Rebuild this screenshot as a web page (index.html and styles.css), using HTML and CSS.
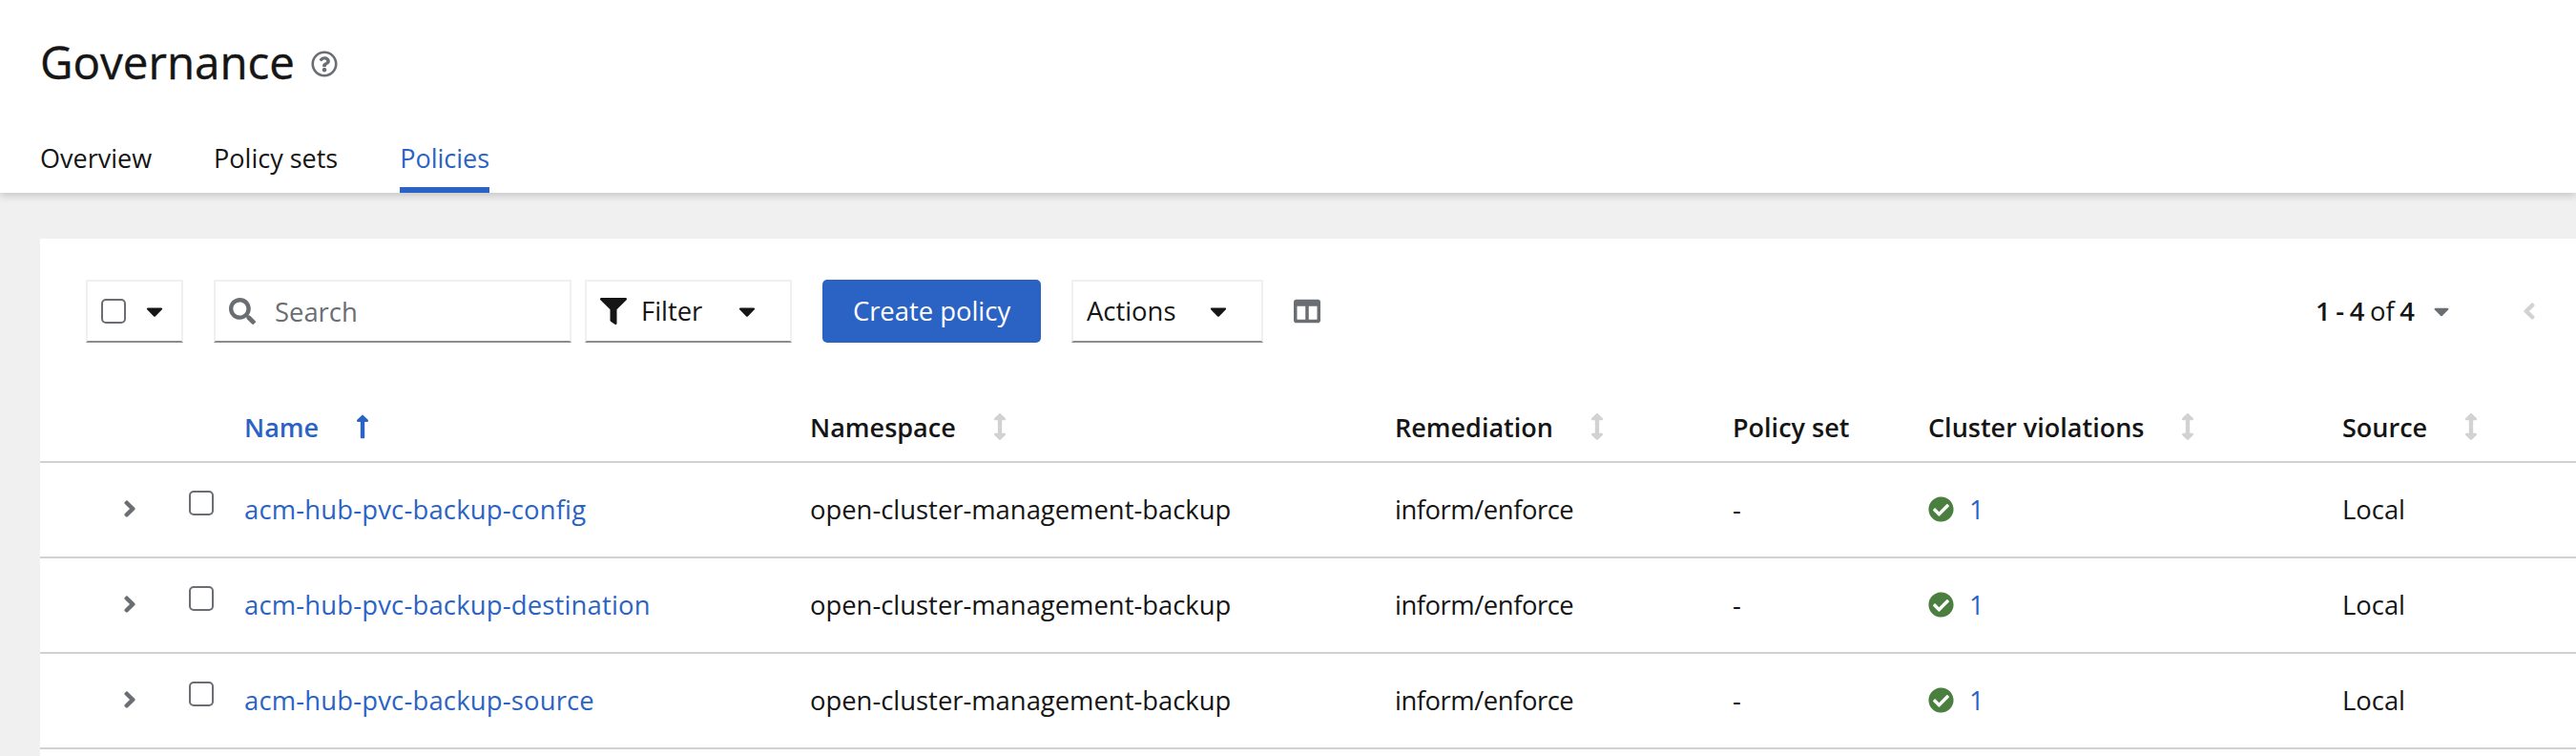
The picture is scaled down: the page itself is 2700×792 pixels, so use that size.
FILE: index.html
```html
<!DOCTYPE html>
<html lang="en">
<head>
  <meta charset="UTF-8">
  <title>Governance</title>
  <link rel="stylesheet" href="styles.css">
</head>
<body>
  <svg class="sprite" xmlns="http://www.w3.org/2000/svg">
    <symbol id="i-help" viewBox="0 0 512 512"><path d="M256 8C119.043 8 8 119.083 8 256c0 136.997 111.043 248 248 248s248-111.003 248-248C504 119.083 392.957 8 256 8zm0 448c-110.532 0-200-89.431-200-200 0-110.495 89.472-200 200-200 110.491 0 200 89.471 200 200 0 110.53-89.431 200-200 200zm107.244-255.2c0 67.052-72.421 68.084-72.421 92.863V300c0 6.627-5.373 12-12 12h-45.647c-6.627 0-12-5.373-12-12v-8.659c0-35.745 27.1-50.034 47.579-61.516 17.561-9.845 28.324-16.541 28.324-29.579 0-17.246-21.999-28.693-39.784-28.693-23.189 0-33.894 10.977-48.942 29.969-4.057 5.12-11.46 6.071-16.666 2.124l-27.824-21.098c-5.107-3.872-6.251-11.066-2.644-16.363C184.846 131.491 214.94 112 261.794 112c49.071 0 101.45 38.304 101.45 88.8zM298 368c0 23.159-18.841 42-42 42s-42-18.841-42-42 18.841-42 42-42 42 18.841 42 42z"/></symbol>
    <symbol id="i-search" viewBox="0 0 512 512"><path d="M505 442.7L405.3 343c-4.5-4.5-10.6-7-17-7H372c27.6-35.3 44-79.7 44-128C416 93.1 322.9 0 208 0S0 93.1 0 208s93.1 208 208 208c48.3 0 92.7-16.4 128-44v16.3c0 6.4 2.5 12.5 7 17l99.7 99.7c9.4 9.4 24.6 9.4 33.9 0l28.3-28.3c9.4-9.4 9.4-24.6.1-34zM208 336c-70.7 0-128-57.2-128-128 0-70.7 57.2-128 128-128 70.7 0 128 57.2 128 128 0 70.7-57.2 128-128 128z"/></symbol>
    <symbol id="i-filter" viewBox="0 0 512 512"><path d="M487.976 0H24.028C2.71 0-8.047 25.866 7.058 40.971L192 225.941V432c0 7.831 3.821 15.17 10.237 19.662l80 55.98C298.02 518.69 320 507.493 320 487.98V225.941l184.947-184.97C520.021 25.896 509.338 0 487.976 0z"/></symbol>
    <symbol id="i-caret" viewBox="0 0 320 512"><path d="M31.3 192h257.3c17.8 0 26.7 21.5 14.1 34.1L174.1 354.8c-7.8 7.8-20.5 7.8-28.3 0L17.2 226.1C4.6 213.5 13.5 192 31.3 192z"/></symbol>
    <symbol id="i-columns" viewBox="0 0 512 512"><path d="M464 32H48C21.49 32 0 53.49 0 80v352c0 26.51 21.49 48 48 48h416c26.51 0 48-21.49 48-48V80c0-26.51-21.49-48-48-48zM224 416H64V160h160v256zm224 0H288V160h160v256z"/></symbol>
    <symbol id="i-right" viewBox="0 0 256 512"><path d="M224.3 273l-136 136c-9.4 9.4-24.6 9.4-33.9 0l-22.6-22.6c-9.4-9.4-9.4-24.6 0-33.9l96.4-96.4-96.4-96.4c-9.4-9.4-9.4-24.6 0-33.9L54.3 103c9.4-9.4 24.6-9.4 33.9 0l136 136c9.5 9.4 9.5 24.6.1 34z"/></symbol>
    <symbol id="i-left" viewBox="0 0 256 512"><path d="M31.7 239l136-136c9.4-9.4 24.6-9.4 33.9 0l22.6 22.6c9.4 9.4 9.4 24.6 0 33.9L127.9 256l96.4 96.4c9.4 9.4 9.4 24.6 0 33.9L201.7 409c-9.4 9.4-24.6 9.4-33.9 0l-136-136c-9.5-9.4-9.5-24.6-.1-34z"/></symbol>
    <symbol id="i-up" viewBox="0 0 256 512"><path d="M88 166.059V468c0 6.627 5.373 12 12 12h56c6.627 0 12-5.373 12-12V166.059h46.059c21.382 0 32.09-25.851 16.971-40.971l-86.059-86.059c-9.373-9.373-24.569-9.373-33.941 0l-86.059 86.059c-15.119 15.119-4.411 40.971 16.971 40.971H88z"/></symbol>
    <symbol id="i-sort" viewBox="0 0 256 512"><path d="M214.059 377.941H168V134.059h46.059c21.382 0 32.09-25.851 16.971-40.971L144.971 7.029c-9.373-9.373-24.569-9.373-33.941 0L24.971 93.088c-15.119 15.119-4.411 40.971 16.971 40.971H88v243.882H41.941c-21.382 0-32.09 25.851-16.971 40.971l86.059 86.059c9.373 9.373 24.569 9.373 33.941 0l86.059-86.059c15.12-15.119 4.412-40.971-16.97-40.971z"/></symbol>
    <symbol id="i-ok" viewBox="0 0 512 512"><path d="M504 256c0 136.967-111.033 248-248 248S8 392.967 8 256 119.033 8 256 8s248 111.033 248 248zM227.314 387.314l184-184c6.248-6.248 6.248-16.379 0-22.627l-22.627-22.627c-6.248-6.249-16.379-6.249-22.628 0L216 308.118l-70.059-70.059c-6.248-6.248-16.379-6.248-22.628 0l-22.627 22.627c-6.248 6.248-6.248 16.379 0 22.627l104 104c6.249 6.249 16.379 6.249 22.628 0z"/></symbol>
  </svg>

  <header class="page-head">
    <div class="title-row">
      <h1>Governance</h1>
      <svg class="help"><use href="#i-help"/></svg>
    </div>
    <nav class="tabs">
      <a href="#">Overview</a>
      <a href="#">Policy sets</a>
      <a href="#" class="current">Policies</a>
    </nav>
  </header>

  <main class="content">
    <section class="card">
      <div class="toolbar">
        <div class="control select-all">
          <input type="checkbox" class="check">
          <svg class="caret"><use href="#i-caret"/></svg>
        </div>
        <div class="control search">
          <svg class="icon grey"><use href="#i-search"/></svg>
          <span class="placeholder">Search</span>
        </div>
        <div class="control filter">
          <svg class="icon"><use href="#i-filter"/></svg>
          <span>Filter</span>
          <svg class="caret"><use href="#i-caret"/></svg>
        </div>
        <button class="primary">Create policy</button>
        <div class="control actions">
          <span>Actions</span>
          <svg class="caret"><use href="#i-caret"/></svg>
        </div>
        <svg class="icon grey columns"><use href="#i-columns"/></svg>
        <div class="pager">
          <span class="range"><b>1 - 4</b> of <b>4</b></span>
          <svg class="caret grey"><use href="#i-caret"/></svg>
          <svg class="prev"><use href="#i-left"/></svg>
        </div>
      </div>

      <table class="policies">
        <colgroup>
          <col class="c-expand"><col class="c-check"><col class="c-name"><col class="c-ns">
          <col class="c-rem"><col class="c-set"><col class="c-viol"><col class="c-src">
        </colgroup>
        <thead>
          <tr>
            <th></th>
            <th></th>
            <th class="sorted"><span class="th">Name<svg class="sort"><use href="#i-up"/></svg></span></th>
            <th><span class="th">Namespace<svg class="sort"><use href="#i-sort"/></svg></span></th>
            <th><span class="th">Remediation<svg class="sort"><use href="#i-sort"/></svg></span></th>
            <th><span class="th">Policy set</span></th>
            <th><span class="th">Cluster violations<svg class="sort"><use href="#i-sort"/></svg></span></th>
            <th><span class="th">Source<svg class="sort"><use href="#i-sort"/></svg></span></th>
          </tr>
        </thead>
        <tbody>
          <tr>
            <td class="expand"><svg class="chevron"><use href="#i-right"/></svg></td>
            <td class="pick"><input type="checkbox" class="check"></td>
            <td class="name"><a href="#">acm-hub-pvc-backup-config</a></td>
            <td>open-cluster-management-backup</td>
            <td class="mode">inform/enforce</td>
            <td>-</td>
            <td><span class="viol"><svg class="ok"><use href="#i-ok"/></svg><a href="#">1</a></span></td>
            <td>Local</td>
          </tr>
          <tr>
            <td class="expand"><svg class="chevron"><use href="#i-right"/></svg></td>
            <td class="pick"><input type="checkbox" class="check"></td>
            <td class="name"><a href="#">acm-hub-pvc-backup-destination</a></td>
            <td>open-cluster-management-backup</td>
            <td class="mode">inform/enforce</td>
            <td>-</td>
            <td><span class="viol"><svg class="ok"><use href="#i-ok"/></svg><a href="#">1</a></span></td>
            <td>Local</td>
          </tr>
          <tr>
            <td class="expand"><svg class="chevron"><use href="#i-right"/></svg></td>
            <td class="pick"><input type="checkbox" class="check"></td>
            <td class="name"><a href="#">acm-hub-pvc-backup-source</a></td>
            <td>open-cluster-management-backup</td>
            <td class="mode">inform/enforce</td>
            <td>-</td>
            <td><span class="viol"><svg class="ok"><use href="#i-ok"/></svg><a href="#">1</a></span></td>
            <td>Local</td>
          </tr>
        </tbody>
      </table>
    </section>
  </main>
</body>
</html>
```

FILE: styles.css
```css
html, body {
  margin: 0;
  height: 792px;
  overflow: hidden;
}

body {
  font-family: "Open Sans", "Noto Sans", sans-serif;
  font-size: 27.4px;
  color: #151515;
  background-color: #f0f0f0;
}

a {
  color: #2b63c4;
  text-decoration: none;
}

.sprite {
  display: none;
}

svg {
  fill: currentColor;
  flex-shrink: 0;
}

.page-head {
  position: relative;
  height: 202px;
  box-sizing: border-box;
  padding-top: 35px;
  background: #fff;
  box-shadow: 0 3px 8px rgba(0,0,0,0.18);
}

.title-row {
  display: flex;
  align-items: center;
  height: 60px;
  padding-left: 42px;
}

h1 {
  margin: 0;
  font-size: 47.5px;
  font-weight: 500;
  line-height: 60px;
  -webkit-text-stroke: 0.4px #151515;
}

.help {
  width: 28px;
  height: 28px;
  margin-top: 4px;
  margin-left: 17px;
  color: #6a6e73;
}

.tabs {
  display: flex;
  gap: 65px;
  margin-top: 35px;
  padding-left: 42px;
  font-size: 27px;
}

.tabs a {
  display: flex;
  align-items: center;
  box-sizing: border-box;
  height: 72px;
  padding-bottom: 2px;
  color: #151515;
}

.tabs a.current {
  color: #2b63c4;
  box-shadow: inset 0 -6px 0 #2b63c4;
}

.content {
  padding: 48px 0 0 42px;
}

.card {
  background: #fff;
  padding-top: 43px;
  height: 499px;
}

.toolbar {
  display: flex;
  align-items: center;
  height: 66px;
  padding: 0 42px 0 48px;
}

.control {
  display: flex;
  align-items: center;
  box-sizing: border-box;
  height: 66px;
  border: 2px solid #f0f0f0;
  border-bottom-color: #8a8d90;
}

.check {
  appearance: none;
  box-sizing: border-box;
  width: 26px;
  height: 26px;
  margin: 0;
  border: 2px solid #6a6e73;
  border-radius: 5px;
  background: #fff;
}

.caret {
  width: 18px;
  height: 28px;
}

.icon {
  width: 28px;
  height: 28px;
}

.grey {
  color: #6a6e73;
}

.select-all {
  width: 102px;
  padding-left: 14px;
  margin-right: 32px;
}

.select-all .caret {
  margin-left: 21px;
}

.search {
  width: 375px;
  padding-left: 14px;
  margin-right: 14px;
}

.placeholder {
  margin-left: 20px;
  color: #6a6e73;
}

.filter {
  width: 217px;
  padding-left: 14px;
  margin-right: 32px;
}

.filter span {
  margin-left: 15px;
  padding-bottom: 2px;
}

.filter .caret {
  margin-left: auto;
  margin-right: 36px;
}

.primary {
  width: 229px;
  height: 66px;
  margin-right: 32px;
  padding: 0 0 2px;
  border: none;
  border-radius: 5px;
  background-color: #2b63c4;
  color: #fff;
  font: inherit;
}

.actions {
  width: 201px;
  padding-left: 14px;
  margin-right: 32px;
}

.actions span {
  padding-bottom: 2px;
}

.actions .caret {
  margin-left: auto;
  margin-right: 36px;
}

.pager {
  display: flex;
  align-items: center;
  margin-left: auto;
}

.range {
  word-spacing: -1.5px;
  padding-bottom: 2px;
}

.range b {
  font-weight: 600;
}

.pager .caret {
  width: 16px;
  margin-left: 20px;
}

.prev {
  width: 14px;
  height: 28px;
  margin-left: 77px;
  color: #d2d2d2;
}

.policies {
  width: 2658px;
  table-layout: fixed;
  border-collapse: collapse;
}

.c-expand { width: 156px; }
.c-check { width: 58px; }
.c-name { width: 593px; }
.c-ns { width: 613px; }
.c-rem { width: 354px; }
.c-set { width: 205px; }
.c-viol { width: 434px; }
.c-src { width: 245px; }

th, td {
  box-sizing: border-box;
  padding: 0;
  text-align: left;
  border-bottom: 2px solid #d2d2d2;
}

th {
  height: 125px;
  padding-top: 52px;
  font-size: 27px;
  font-weight: 600;
}

td {
  height: 100px;
  padding-bottom: 2px;
}

.th {
  display: flex;
  align-items: center;
}

.sort {
  width: 14px;
  height: 28px;
  margin-left: 39px;
  color: #d2d2d2;
}

.sorted,
.sorted .sort {
  color: #2b63c4;
}

.name {
  letter-spacing: 0.2px;
}

.mode {
  letter-spacing: -0.45px;
}

.expand {
  padding-left: 87px;
}

.chevron {
  display: block;
  width: 14px;
  height: 28px;
  color: #6a6e73;
}

.pick {
  padding-bottom: 14px;
}

.pick .check {
  display: block;
}

.viol {
  display: flex;
  align-items: center;
  gap: 16px;
}

.ok {
  width: 27px;
  height: 27px;
  color: #4b7f3f;
}
```
